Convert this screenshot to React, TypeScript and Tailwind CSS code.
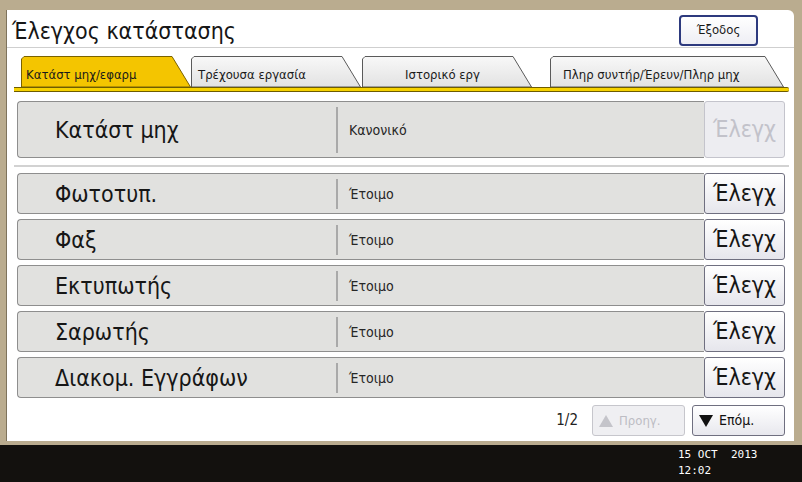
import React from "react";

const font = { fontFamily: '"DejaVu Sans Condensed", "DejaVu Sans", sans-serif' };

function Tab({ w, label, active, pad = "pl-[5px]", center }: { w: number; label: string; active?: boolean; pad?: string; center?: boolean }) {
  const s = 18;
  const pts = `0.5,31 0.5,3 3,0.5 ${w - s - 1},0.5 ${w - 0.5},31`;
  return (
    <div className="relative h-[31px] shrink-0" style={{ width: w }}>
      <svg className="absolute inset-0" width={w} height={31}>
        <defs>
          <linearGradient id="tg" x1="0" y1="0" x2="0" y2="1">
            <stop offset="0" stopColor="#f8f8f8" />
            <stop offset="1" stopColor="#e2e2e2" />
          </linearGradient>
        </defs>
        <polygon points={pts} fill={active ? "#f4c500" : "url(#tg)"} stroke={active ? "#7a6200" : "#5a5a5a"} strokeWidth="1" />
      </svg>
      <div className={`relative flex h-full items-end pb-[6px] text-[13px] leading-none text-[#1a1a1a] ${pad} ${center ? "justify-center pr-[14px]" : ""}`}>
        {label}
      </div>
    </div>
  );
}

function Row({ label, value, disabled, tall }: { label: string; value: string; disabled?: boolean; tall?: boolean }) {
  return (
    <div className={`flex ${tall ? "h-[57px]" : "h-[41px]"}`}>
      <div className="flex flex-1 items-center rounded-l-[4px] border border-r-0 border-[#8e8e8e] bg-[#e1e1df]">
        <div className="w-[318px] shrink-0 pl-[37px] pt-[2px] text-[23px] leading-none text-[#161616]">{label}</div>
        <div className={`w-[2px] shrink-0 bg-[#a9a9a9] ${tall ? "h-[46px]" : "h-[30px]"}`} />
        <div className="pl-[11px] pt-[2px] text-[14px] text-[#262626]">{value}</div>
      </div>
      <div
        className={`flex w-[81px] items-center justify-center rounded-[3px] border text-[23px] leading-none ${
          disabled
            ? "border-[#c4c4cc] bg-[#ededf1] text-[#c2c2ca]"
            : "border-[#6f6f80] bg-gradient-to-b from-[#ffffff] to-[#e6e6ec] text-[#161616]"
        }`}
      >
        Έλεγχ
      </div>
    </div>
  );
}

export default function App() {
  return (
    <div className="flex h-[482px] w-[802px] flex-col overflow-hidden bg-[#baac8f]" style={font}>
      <div className="ml-[6px] mr-[8px] mt-[10px] flex h-[431px] flex-col rounded-tr-[6px] border-l border-[#7e735c] bg-white">
        <div className="flex h-[38px] items-center justify-between border-b border-[#cfcfcf] pl-[5px] pr-[36px]">
          <div className="pt-[6px] text-[23px] leading-none text-[#161616]">Έλεγχος κατάστασης</div>
          <div className="mt-[3px] flex h-[31px] w-[79px] items-center justify-center rounded-[4px] border-2 border-[#2d3a7e] bg-gradient-to-b from-[#ffffff] to-[#eeeef4] text-[13px] text-[#1a1a1a]">
            Έξοδος
          </div>
        </div>

        <div className="mt-[8px] flex pl-[14px]">
          <Tab w={170} label="Κατάστ μηχ/εφαρμ" active />
          <Tab w={170} label="Τρέχουσα εργασία" pad="pl-[7px]" />
          <div className="w-[1px]" />
          <Tab w={170} label="Ιστορικό εργ" center />
          <div className="w-[18px]" />
          <Tab w={234} label="Πληρ συντήρ/Έρευν/Πληρ μηχ" pad="pl-[13px]" />
        </div>
        <div className="ml-[7px] mr-[5px] h-[5px] rounded-r-[2px] border-t border-b border-[#6e5c00] bg-[#f6d200]" />

        <div className="ml-[10px] mr-[9px] mt-[9px] flex flex-col">
          <Row label="Κατάστ μηχ" value="Κανονικό" disabled tall />
          <div className="mb-[6px] mt-[7px] ml-[-3px] mr-[-4px] h-[2px] bg-[#d2d2d2]" />
          <div className="flex flex-col gap-[5px]">
            <Row label="Φωτοτυπ." value="Έτοιμο" />
            <Row label="Φαξ" value="Έτοιμο" />
            <Row label="Εκτυπωτής" value="Έτοιμο" />
            <Row label="Σαρωτής" value="Έτοιμο" />
            <Row label="Διακομ. Εγγράφων" value="Έτοιμο" />
          </div>
          <div className="mt-[7px] flex items-center justify-end">
            <div className="mr-[14px] text-[15px] text-[#222]">1/2</div>
            <div className="flex h-[31px] w-[93px] items-center gap-[6px] rounded-[3px] border border-[#c6c6cc] bg-[#efeff2] pl-[6px] text-[13px] text-[#bdbdc4]">
              <svg width="14" height="12" viewBox="0 0 14 12"><polygon points="7,0 14,12 0,12" fill="#c4c4ca" /></svg>
              Προηγ.
            </div>
            <div className="ml-[7px] flex h-[31px] w-[93px] items-center gap-[6px] rounded-[3px] border border-[#6f6f80] bg-gradient-to-b from-[#ffffff] to-[#e8e8ee] pl-[6px] text-[14px] text-[#111]">
              <svg width="14" height="12" viewBox="0 0 14 12"><polygon points="0,0 14,0 7,12" fill="#111" /></svg>
              Επόμ.
            </div>
          </div>
        </div>
      </div>
      <div className="mt-[4px] flex-1 bg-[#13110e] pl-[678px] pt-[2px] text-[11px] leading-[16px] text-white" style={{ fontFamily: '"DejaVu Sans Mono", monospace' }}>
        <div className="whitespace-pre">15 OCT  2013</div>
        <div>12:02</div>
      </div>
    </div>
  );
}
